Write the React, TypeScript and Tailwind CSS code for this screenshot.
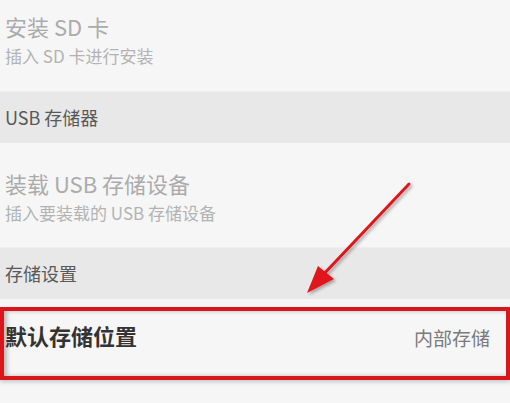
import React from 'react';

const font = { fontFamily: '"Noto Sans CJK SC", "Noto Sans", sans-serif' };

// 设置项（禁用状态，带副标题）
const DisabledItem: React.FC<{ title: string; summary: string; className?: string }> = ({
  title,
  summary,
  className = '',
}) => (
  <div className={`px-[5px] ${className}`}>
    <div className="text-[22px] leading-[30px] text-[#ababab]">{title}</div>
    <div className="mt-[3px] text-[17px] leading-[24px] text-[#b3b3b3]">{summary}</div>
  </div>
);

// 分组标题
const SectionHeader: React.FC<{ label: string }> = ({ label }) => (
  <div className="h-[52px] flex items-center px-[5px] bg-[#e8e8e8] border-t border-[#eeeeee]">
    <span className="text-[18px] text-[#595959]">{label}</span>
  </div>
);

const App: React.FC = () => {
  return (
    <div className="relative w-[510px] h-[403px] overflow-hidden bg-[#f6f6f6]" style={font}>
      <DisabledItem title="安装 SD 卡" summary="插入 SD 卡进行安装" className="pt-[11px] h-[91px]" />
      <SectionHeader label="USB 存储器" />
      <DisabledItem
        title="装载 USB 存储设备"
        summary="插入要装载的 USB 存储设备"
        className="pt-[25px] h-[104px]"
      />
      <SectionHeader label="存储设置" />

      {/* 默认存储位置 */}
      <div className="relative h-[90px] pt-[21px] px-[5px] flex items-start justify-between">
        <span className="text-[22px] leading-[30px] font-bold text-[#333333]">默认存储位置</span>
        <span className="mt-[4px] mr-[15px] text-[19px] leading-[28px] text-[#7a7a7a]">内部存储</span>
        {/* 红框标注 */}
        <div className="absolute left-0 right-0 top-[8px] h-[73px] border-4 border-[#d8161b] shadow-[inset_3px_0_4px_rgba(0,0,0,0.25),0_2px_4px_rgba(0,0,0,0.2)]" />
      </div>

      <div className="pt-[8px] px-[5px] text-[22px] leading-[30px] text-[#ababab]">内部存储</div>

      {/* 红色箭头 */}
      <svg className="absolute inset-0 pointer-events-none" width="510" height="403" viewBox="0 0 510 403">
        <defs>
          <filter id="sh" x="-20%" y="-20%" width="140%" height="140%">
            <feDropShadow dx="2" dy="2" stdDeviation="1.5" floodColor="#000" floodOpacity="0.3" />
          </filter>
        </defs>
        <g filter="url(#sh)">
          <line x1="409" y1="184" x2="320" y2="278" stroke="#e0161a" strokeWidth="3" strokeLinecap="round" />
          <polygon points="307,293 318,266 334,279" fill="#e0161a" />
        </g>
      </svg>
    </div>
  );
};

export default App;
